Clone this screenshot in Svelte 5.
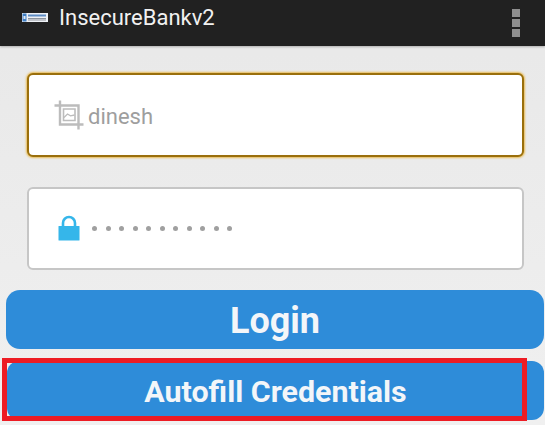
<script lang="ts">
	let username = 'dinesh';
	const dots = Array.from({ length: 11 });
</script>

<div class="screen">
	<header class="toolbar">
		<svg class="logo" width="26" height="9" viewBox="0 0 26 9">
			<rect width="26" height="9" fill="#eef1f6" />
			<rect x="0.500" y="0.500" width="4" height="8" fill="#3f7fc4" />
			<rect x="1.500" y="3" width="2" height="3" fill="#dfe8f3" />
			<rect x="6" y="1.500" width="18" height="2" fill="#5d8cc4" />
			<rect x="6" y="5" width="18" height="1.500" fill="#8b929c" />
			<rect x="6" y="7.200" width="18" height="0.800" fill="#b4b8be" />
		</svg>
		<span class="title">InsecureBankv2</span>
		<div class="overflow">
			<i></i><i></i><i></i>
		</div>
	</header>

	<main class="content">
		<div class="field focused">
			<svg class="crop" width="30" height="30" viewBox="0 0 30 30" fill="none" stroke="#bcbcbc" stroke-width="2.400">
				<path d="M0.500 5.500h24V29.500M6 0.500V24.500H29.500" />
				<path d="M9.500 9h11.500v11.500h-11.500z" stroke-width="1.600" />
				<path d="M10 17.500l3.500-3.500 3 1.800 4 -0.800" stroke-width="1.300" />
			</svg>
			<span class="value">{username}</span>
		</div>

		<div class="field secret">
			<svg class="lock" width="22" height="26" viewBox="0 0 22 26">
				<path d="M5 12V8a6 6 0 0 1 12 0v4" fill="none" stroke="#35b6ea" stroke-width="2.600" />
				<rect x="0.500" y="11" width="21" height="14.500" rx="0.500" fill="#35b6ea" />
			</svg>
			<div class="dots">
				{#each dots as _}
					<i></i>
				{/each}
			</div>
		</div>

		<button class="action login">Login</button>
		<button class="action autofill">Autofill Credentials</button>
	</main>

	<div class="highlight"></div>
</div>

<style>
	:global(body) {
		margin: 0;
		background: #eeeeee;
	}

	.screen {
		position: relative;
		width: 545px;
		height: 425px;
		overflow: hidden;
		font-family: Roboto, "Liberation Sans", sans-serif;
		background: linear-gradient(#e8e8e8, #f0f0f0);
	}

	.toolbar {
		display: flex;
		align-items: center;
		height: 46px;
		box-sizing: border-box;
		padding: 0 25px 11px 22px;
		background: #212121;
		box-shadow: 0 1px 2px rgb(0 0 0 / 0.25);
	}

	.title {
		margin-left: 11px;
		font-size: 22px;
		color: #f1f1f1;
	}

	.overflow {
		display: flex;
		flex-direction: column;
		gap: 2px;
		margin-left: auto;
		padding-top: 11px;
	}

	.overflow i {
		display: block;
		width: 8px;
		height: 8px;
		background: #8f8f8f;
	}

	.content {
		display: flex;
		flex-direction: column;
		padding: 27px 1px 0 6px;
	}

	.field {
		display: flex;
		align-items: center;
		box-sizing: border-box;
		width: 497px;
		height: 84px;
		margin-left: 21px;
		background: #fff;
		border: 2px solid #c6c6c6;
		border-radius: 6px;
	}

	.focused {
		border-color: #9a6f0c;
		box-shadow: 0 0 2px 1px #e8bc58;
		padding-left: 25px;
	}

	.secret {
		height: 83px;
		margin-top: 30px;
		padding-left: 29px;
	}

	.lock {
		margin-top: -2px;
	}

	.value {
		margin-left: 4px;
		padding-top: 2px;
		font-size: 22px;
		color: #9e9e9e;
	}

	.dots {
		display: flex;
		gap: 8.500px;
		margin-left: 12px;
	}

	.dots i {
		display: block;
		width: 5px;
		height: 5px;
		border-radius: 50%;
		background: #a0a0a0;
	}

	.action {
		display: block;
		width: 538px;
		border: none;
		background: #2e8cd9;
		color: #f3f6f9;
		font-family: inherit;
		font-weight: 700;
		padding: 2px 0 0;
	}

	.login {
		height: 59px;
		margin-top: 20px;
		border-radius: 14px;
		font-size: 36px;
	}

	.autofill {
		height: 59px;
		margin-top: 12px;
		margin-left: 1px;
		width: 537px;
		border-radius: 12px;
		font-size: 30.400px;
	}

	.highlight {
		position: absolute;
		left: 2px;
		top: 358px;
		width: 515px;
		height: 53px;
		border: 5px solid #ed1c24;
	}
</style>
